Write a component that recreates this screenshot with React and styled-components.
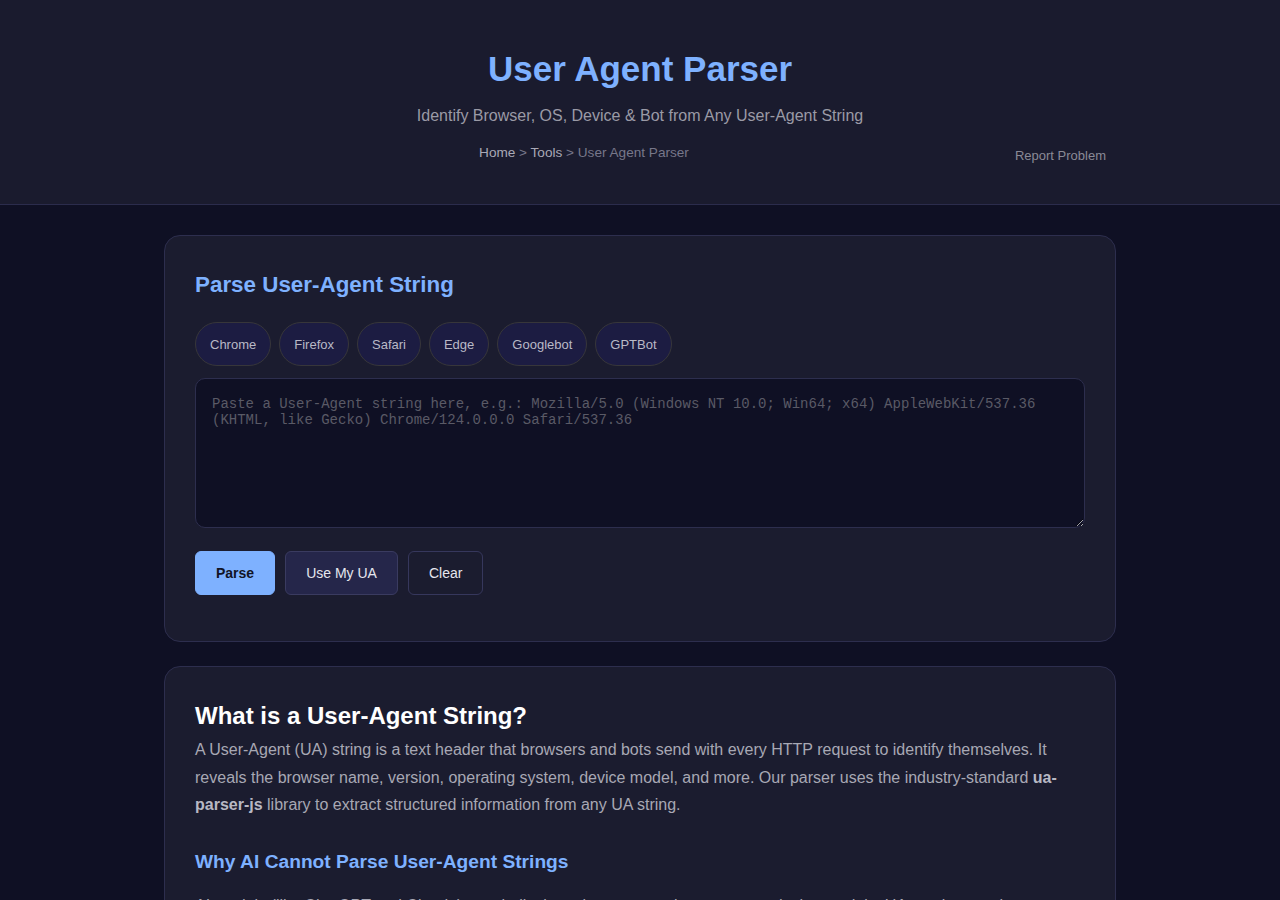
import React from "react";
import styled, { createGlobalStyle } from "styled-components";

const GlobalStyle = createGlobalStyle`
  html, body {
    margin: 0;
    padding: 0;
    background: #0f1024;
    font-family: "Liberation Sans", Arial, sans-serif;
  }
  * { box-sizing: border-box; }
`;

const Header = styled.header`
  background: #1a1b2e;
  border-bottom: 1px solid #2b2c4c;
  padding: 48px 0 41px;
  text-align: center;
`;

const Title = styled.h1`
  margin: 0;
  font-size: 35px;
  line-height: 41px;
  font-weight: 700;
  color: #7eb1ff;
`;

const Subtitle = styled.p`
  margin: 18px 0 0;
  font-size: 16px;
  line-height: 18px;
  color: #9a9aa6;
`;

const NavRow = styled.div`
  max-width: 950px;
  margin: 20px auto 0;
  display: flex;
  align-items: flex-start;
`;

const Breadcrumb = styled.nav`
  flex: 1;
  text-align: center;
  font-size: 13.6px;
  line-height: 15px;
  color: #77778a;
`;

const Crumb = styled.a`
  color: #a9a9b6;
  text-decoration: none;
`;

const ReportLink = styled.a`
  margin: 3px 9px 0 12px;
  font-size: 13px;
  line-height: 15px;
  color: #8a8a96;
  text-decoration: none;
`;

const Main = styled.main`
  max-width: 952px;
  margin: 30px auto 0;
  display: flex;
  flex-direction: column;
  gap: 24px;
`;

const Card = styled.section`
  background: #1b1c2f;
  border: 1px solid #2d2e4e;
  border-radius: 16px;
  padding: 30px;
`;

const CardTitle = styled.h2`
  margin: 5px 0 24px;
  font-size: 22.4px;
  line-height: 27px;
  font-weight: 700;
  color: #7eb1ff;
`;

const Presets = styled.div`
  display: flex;
  flex-wrap: wrap;
  gap: 8px;
  margin-bottom: 12px;
`;

const Chip = styled.button`
  height: 44px;
  padding: 0 14px;
  border-radius: 22px;
  border: 1px solid #37363a;
  background: #1c1c42;
  color: #b9b9c6;
  font-family: "Liberation Sans", Arial, sans-serif;
  font-size: 13px;
  cursor: pointer;
`;

const UAInput = styled.textarea`
  display: block;
  width: 100%;
  height: 150px;
  padding: 17px 16px 16px;
  background: #0f1024;
  border: 1px solid #2d2e4e;
  border-radius: 10px;
  color: #d0d0dc;
  font-family: "Liberation Mono", "DejaVu Sans Mono", monospace;
  font-size: 14px;
  line-height: 16px;
  resize: vertical;
  outline: none;
  &::placeholder {
    color: #5a5a66;
  }
`;

const Actions = styled.div`
  display: flex;
  gap: 10px;
  margin: 23px 0 16px;
`;

const variants = {
  primary: "background:#7eb1ff;color:#111425;font-weight:700;border:1px solid #7eb1ff;",
  secondary: "background:#25264a;color:#e6e6ee;border:1px solid #3a3b60;",
  ghost: "background:transparent;color:#e6e6ee;border:1px solid #36375c;",
};

const Button = styled.button`
  height: 44px;
  padding: 0 20px;
  border-radius: 6px;
  font-family: "Liberation Sans", Arial, sans-serif;
  font-size: 14px;
  cursor: pointer;
  ${(p) => variants[p.$variant]}
`;

const InfoTitle = styled.h2`
  margin: 4px 0 6px;
  font-size: 24px;
  line-height: 29px;
  font-weight: 700;
  color: #ffffff;
`;

const Para = styled.p`
  margin: 0 0 31px;
  font-size: 16px;
  line-height: 27.5px;
  color: #a8a8b4;
  strong { color: #b8b8c4; }
`;

const SubTitle = styled.h3`
  margin: 0 0 18px;
  font-size: 19.2px;
  line-height: 24px;
  font-weight: 700;
  color: #7eb1ff;
`;

const presets = ["Chrome", "Firefox", "Safari", "Edge", "Googlebot", "GPTBot"];

export default function App() {
  return (
    <>
      <GlobalStyle />
      <Header>
        <Title>User Agent Parser</Title>
        <Subtitle>Identify Browser, OS, Device &amp; Bot from Any User-Agent String</Subtitle>
        <NavRow>
          <Breadcrumb>
            <Crumb href="#">Home</Crumb> &gt; <Crumb href="#">Tools</Crumb> &gt; User Agent Parser
          </Breadcrumb>
          <ReportLink href="#">Report Problem</ReportLink>
        </NavRow>
      </Header>
      <Main>
        <Card>
          <CardTitle>Parse User-Agent String</CardTitle>
          <Presets>
            {presets.map((p) => (
              <Chip key={p}>{p}</Chip>
            ))}
          </Presets>
          <UAInput placeholder="Paste a User-Agent string here, e.g.: Mozilla/5.0 (Windows NT 10.0; Win64; x64) AppleWebKit/537.36 (KHTML, like Gecko) Chrome/124.0.0.0 Safari/537.36" />
          <Actions>
            <Button $variant="primary">Parse</Button>
            <Button $variant="secondary">Use My UA</Button>
            <Button $variant="ghost">Clear</Button>
          </Actions>
        </Card>
        <Card>
          <InfoTitle>What is a User-Agent String?</InfoTitle>
          <Para>
            A User-Agent (UA) string is a text header that browsers and bots send with every HTTP
            request to identify themselves. It reveals the browser name, version, operating system,
            device model, and more. Our parser uses the industry-standard <strong>ua-parser-js</strong>{" "}
            library to extract structured information from any UA string.
          </Para>
          <SubTitle>Why AI Cannot Parse User-Agent Strings</SubTitle>
          <Para>
            AI models (like ChatGPT and Claude) may hallucinate browser versions or guess device
            models. UA parsing requires an up-to-date rule database of regular expressions that is
            maintained and tested against thousands of real-world strings.
          </Para>
        </Card>
      </Main>
    </>
  );
}
